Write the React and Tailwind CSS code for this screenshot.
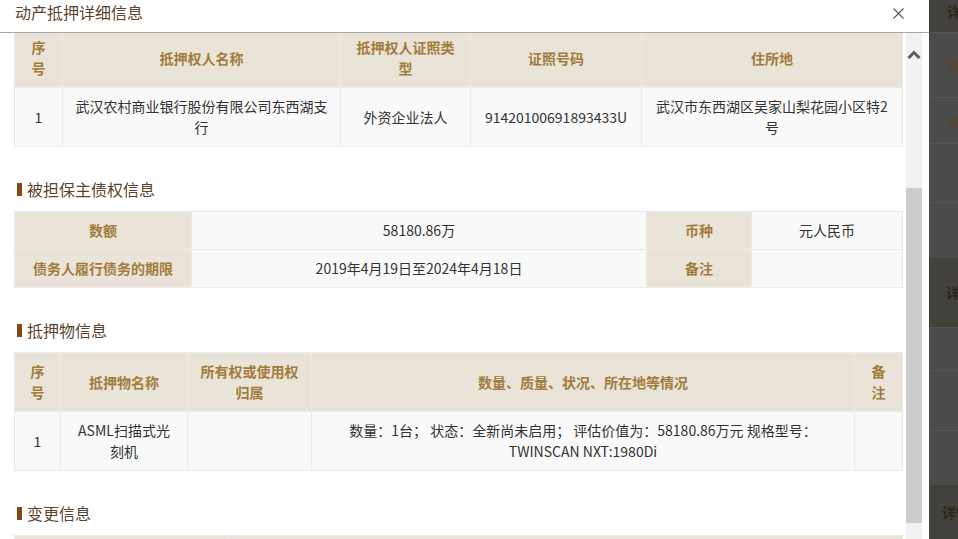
import React from 'react'

const th = 'border border-[#ebebeb] bg-[#e9e3d8] px-[10px] py-[8px] text-center font-bold text-[#a27c3c]'
const td = 'border border-[#ebebeb] bg-[#f9f9f9] px-[10px] py-[8px] text-center text-[#333]'

function SectionTitle({ children }) {
  return (
    <div className="mt-[31px] mb-[11px] flex h-[22px] items-center">
      <span className="ml-[3px] mr-[5px] h-[13px] w-[5px] bg-[#8b4513]" />
      <span className="text-[16px] leading-[22px] text-[#5b4530]">{children}</span>
    </div>
  )
}

function Scrollbar() {
  return (
    <div className="flex w-[16px] flex-col bg-[#f1f1f1]">
      <div className="flex h-[40px] items-center justify-center pt-[3px]">
        <svg width="14" height="9" viewBox="0 0 14 9">
          <path d="M1.5 8 L7 2.5 L12.5 8" fill="none" stroke="#5c5c5c" strokeWidth="3" />
        </svg>
      </div>
      <div className="h-[115px]" />
      <div className="h-[335px] bg-[#cdcdcd]" />
    </div>
  )
}

function Backdrop() {
  const row = 'border-t border-[#545454] flex items-center pl-[18px] text-[14px] text-[#5a4328] whitespace-nowrap'
  const head = 'bg-[#43413c] flex items-center whitespace-nowrap text-[14px] font-bold text-[#2e2516]'
  return (
    <div className="flex h-[539px] flex-1 flex-col overflow-hidden bg-[#4b4b4b]">
      <div className={`${head} h-[32px] items-start pl-[18px] pt-[1px]`}>详情</div>
      <div className={`${row} h-[65px] pt-[1px]`}>查看</div>
      <div className={`${row} h-[46px] pt-[4px]`}>查看</div>
      <div className={`${row} h-[59px]`} />
      <div className={`${row} h-[56px]`} />
      <div className={`${head} h-[69px] pl-[17px]`}>详情</div>
      <div className={`${row} h-[43px]`} />
      <div className={`${row} h-[60px]`} />
      <div className={`${row} h-[55px]`} />
      <div className={`${head} flex-1 items-stretch`}>
        <div className="w-[10px] border-r border-[#4d4a45]" />
        <div className="flex items-center pl-[12px]">详情</div>
      </div>
    </div>
  )
}

export default function App() {
  return (
    <div className="flex h-[539px] w-[958px] overflow-hidden bg-white font-['Noto_Sans_CJK_SC',sans-serif] text-[14px] leading-[21px]">
      <div className="flex h-[539px] w-[929px] flex-col bg-white">
        <div className="flex h-[33px] shrink-0 items-start justify-between border-b border-[#a6a6a6] pl-[15px] pr-[25px]">
          <span className="pt-[1px] text-[16px] leading-[22px] text-[#5b4530]">动产抵押详细信息</span>
          <svg className="mt-[8px]" width="11" height="11" viewBox="0 0 11 11">
            <path d="M0.5 0.5 L10.5 10.5 M10.5 0.5 L0.5 10.5" stroke="#555" strokeWidth="1.1" />
          </svg>
        </div>

        <div className="flex min-h-0 flex-1">
          <div className="min-w-0 flex-1 overflow-hidden pl-[14px] pr-[4px]">
            <div className="-mt-[5px]">
              <table className="w-[888px] table-fixed border-collapse">
                <colgroup>
                  <col className="w-[48px]" />
                  <col className="w-[278px]" />
                  <col className="w-[130px]" />
                  <col className="w-[171px]" />
                  <col className="w-[261px]" />
                </colgroup>
                <thead>
                  <tr>
                    <th className={th}>序号</th>
                    <th className={th}>抵押权人名称</th>
                    <th className={th}>抵押权人证照类型</th>
                    <th className={th}>证照号码</th>
                    <th className={th}>住所地</th>
                  </tr>
                </thead>
                <tbody>
                  <tr>
                    <td className={td}>1</td>
                    <td className={td}>武汉农村商业银行股份有限公司东西湖支行</td>
                    <td className={td}>外资企业法人</td>
                    <td className={td}>91420100691893433U</td>
                    <td className={td}>武汉市东西湖区吴家山梨花园小区特2号</td>
                  </tr>
                </tbody>
              </table>

              <SectionTitle>被担保主债权信息</SectionTitle>
              <table className="w-[888px] table-fixed border-collapse">
                <colgroup>
                  <col className="w-[177px]" />
                  <col className="w-[455px]" />
                  <col className="w-[105px]" />
                  <col className="w-[151px]" />
                </colgroup>
                <tbody>
                  <tr>
                    <td className={th}>数额</td>
                    <td className={td}>58180.86万</td>
                    <td className={th}>币种</td>
                    <td className={td}>元人民币</td>
                  </tr>
                  <tr>
                    <td className={th}>债务人履行债务的期限</td>
                    <td className={td}>2019年4月19日至2024年4月18日</td>
                    <td className={th}>备注</td>
                    <td className={td}></td>
                  </tr>
                </tbody>
              </table>

              <SectionTitle>抵押物信息</SectionTitle>
              <table className="w-[888px] table-fixed border-collapse">
                <colgroup>
                  <col className="w-[46px]" />
                  <col className="w-[127px]" />
                  <col className="w-[124px]" />
                  <col className="w-[543px]" />
                  <col className="w-[48px]" />
                </colgroup>
                <thead>
                  <tr>
                    <th className={th}>序号</th>
                    <th className={th}>抵押物名称</th>
                    <th className={th}>所有权或使用权归属</th>
                    <th className={th}>数量、质量、状况、所在地等情况</th>
                    <th className={th}>备注</th>
                  </tr>
                </thead>
                <tbody>
                  <tr>
                    <td className={td}>1</td>
                    <td className={td}>
                      ASML扫描式光
                      <br />
                      刻机
                    </td>
                    <td className={td}></td>
                    <td className={td}>
                      数量：1台； 状态：全新尚未启用； 评估价值为：58180.86万元 规格型号：
                      <br />
                      TWINSCAN NXT:1980Di
                    </td>
                    <td className={td}></td>
                  </tr>
                </tbody>
              </table>

              <SectionTitle>变更信息</SectionTitle>
              <table className="w-[888px] table-fixed border-collapse">
                <colgroup>
                  <col className="w-[214px]" />
                  <col className="w-[674px]" />
                </colgroup>
                <thead>
                  <tr>
                    <th className={th}>变更日期</th>
                    <th className={th}>变更内容</th>
                  </tr>
                </thead>
              </table>
            </div>
          </div>
          <Scrollbar />
          <div className="w-[7px]" />
        </div>
      </div>
      <Backdrop />
    </div>
  )
}
